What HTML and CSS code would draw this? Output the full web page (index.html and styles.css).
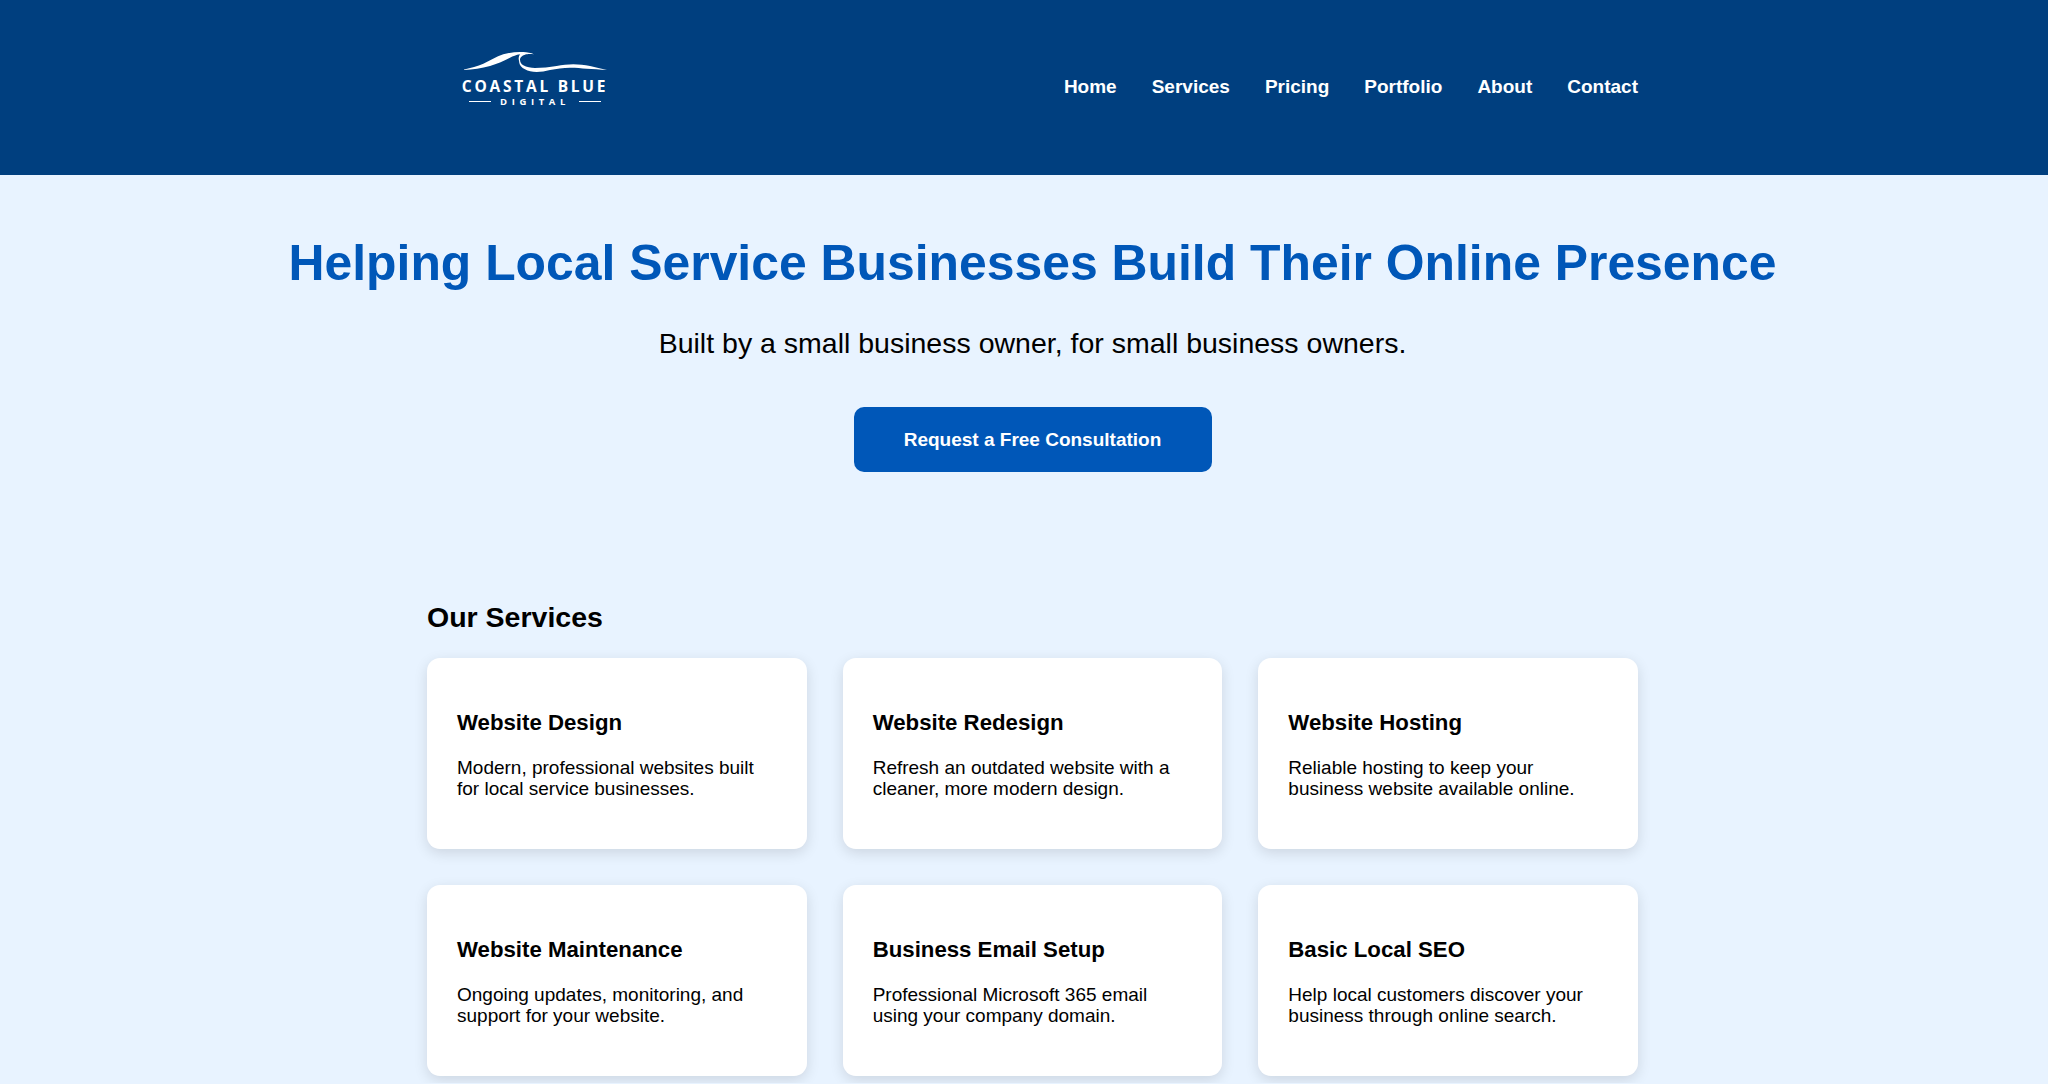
FILE: index.html
```html
<!DOCTYPE html>
<html>
<head>
  <title>Coastal Blue Digital</title>
  <link rel="stylesheet" href="styles.css">
</head>
<body>
  <header class="site-header">
    <div class="header-inner">
      <a class="logo" href="#">
        <svg class="logo-wave" viewBox="0 0 143 20" width="143" height="20">
          <path fill="#fff" d="M0 17.6C7 15.8 13.5 14 19.3 11.7C26 9 32 4.5 39.3 2.3C46 .4 53 -.2 59.3 .1C63 .3 67 1 70 2.3C66.5 2 63 2 61 2.7C58 3.6 56 5.3 56 7.3C56 10 57 12 59.3 13.3C62.5 15.3 67 16 71 16C78 16 85.5 15 92.7 14C98 13.2 104 12.3 109.3 12.3C115 12.4 120.5 13 126 14C131.5 15.2 137 16.6 143 18C136 17.4 129 17 122.7 16.7C117 16.3 111 15.6 106 15.7C99 16 92.5 16.7 86 18C81.5 19 77 20 72.7 20C68 20 64 19 61 17.3C57.5 15.5 55.5 13 55.3 10.7C55 8.5 54.5 7 54.7 5.7C54.9 4.4 55.4 3.2 56 2.3C52 3 49 4.2 46 5.7C39 9 33 12 26 14C17.5 16.4 9 17.6 0 18Z"/>
        </svg>
        <span class="logo-name">COASTAL BLUE</span>
        <span class="logo-sub">DIGITAL</span>
      </a>
      <nav class="main-nav">
        <a href="#">Home</a>
        <a href="#">Services</a>
        <a href="#">Pricing</a>
        <a href="#">Portfolio</a>
        <a href="#">About</a>
        <a href="#">Contact</a>
      </nav>
    </div>
  </header>

  <section class="hero">
    <h1>Helping Local Service Businesses Build Their Online Presence</h1>
    <p>Built by a small business owner, for small business owners.</p>
    <a class="btn" href="#">Request a Free Consultation</a>
  </section>

  <section class="services">
    <h2>Our Services</h2>
    <div class="card-grid">
      <div class="card">
        <h3>Website Design</h3>
        <p>Modern, professional websites built for local service businesses.</p>
      </div>
      <div class="card">
        <h3>Website Redesign</h3>
        <p>Refresh an outdated website with a cleaner, more modern design.</p>
      </div>
      <div class="card">
        <h3>Website Hosting</h3>
        <p>Reliable hosting to keep your business website available online.</p>
      </div>
      <div class="card">
        <h3>Website Maintenance</h3>
        <p>Ongoing updates, monitoring, and support for your website.</p>
      </div>
      <div class="card">
        <h3>Business Email Setup</h3>
        <p>Professional Microsoft 365 email using your company domain.</p>
      </div>
      <div class="card">
        <h3>Basic Local SEO</h3>
        <p>Help local customers discover your business through online search.</p>
      </div>
    </div>
  </section>
</body>
</html>
```

FILE: styles.css
```css
html, body {
  margin: 0;
  background: #e8f3ff;
  color: #000;
  font-family: "Liberation Sans", Arial, sans-serif;
}

a {
  text-decoration: none;
}

.site-header {
  box-sizing: border-box;
  height: 175px;
  padding-left: 17px;
  background: #003f7f;
}

.header-inner {
  width: 1211px;
  height: 100%;
  margin: 0 auto;
  display: flex;
  justify-content: space-between;
  align-items: center;
}

.logo {
  display: flex;
  flex-direction: column;
  align-items: center;
  width: 144px;
  margin: 0 0 16px 36px;
  color: #fff;
}

.logo-wave {
  display: block;
}

.logo-name {
  margin-top: 7px;
  font-family: "Open Sans", sans-serif;
  font-size: 15.5px;
  font-weight: 700;
  line-height: 15px;
  letter-spacing: 2.75px;
  white-space: nowrap;
}

.logo-sub {
  display: flex;
  align-items: center;
  gap: 9px;
  width: 132px;
  margin-top: 2px;
  font-family: "Open Sans", sans-serif;
  font-size: 9.5px;
  font-weight: 700;
  line-height: 12px;
  letter-spacing: 4.6px;
}

.logo-sub::before,
.logo-sub::after {
  content: "";
  flex: 1;
  height: 1px;
  background: #fff;
}

.main-nav {
  display: flex;
  gap: 35px;
  margin-bottom: 2px;
}

.main-nav a {
  color: #fff;
  font-size: 19px;
  font-weight: 700;
}

.hero {
  padding: 60px 0 0 17px;
  text-align: center;
}

.hero h1 {
  margin: 0;
  color: #0057b8;
  font-size: 49.875px;
  line-height: 56px;
}

.hero p {
  margin: 35px 0 0;
  font-size: 28.5px;
  line-height: 34px;
}

.btn {
  display: inline-block;
  width: 358px;
  margin-top: 47px;
  background: #0057b8;
  border-radius: 10px;
  color: #fff;
  font-size: 19px;
  font-weight: 700;
  line-height: 65px;
}

.services {
  width: 1211px;
  margin-left: 427px;
  padding: 128px 0 7px;
}

.services h2 {
  margin: 0 0 24px;
  font-size: 28.5px;
  line-height: 34px;
}

.card-grid {
  display: grid;
  grid-template-columns: repeat(3, 1fr);
  gap: 36px;
}

.card {
  box-sizing: border-box;
  height: 191px;
  padding: 52px 30px 0;
  background: #fff;
  border-radius: 13px;
  box-shadow: 0 4px 14px rgba(0, 0, 0, 0.12);
}

.card h3 {
  margin: 0 0 21px;
  font-size: 22.23px;
  line-height: 26px;
}

.card p {
  margin: 0;
  font-size: 19px;
  line-height: 21px;
}
```
